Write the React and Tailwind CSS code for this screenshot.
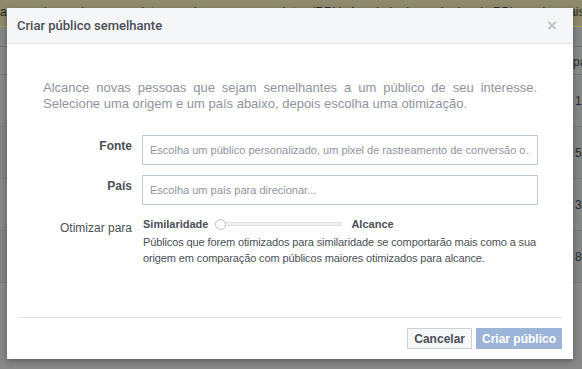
import React, { useState } from "react";

const font = "font-['Liberation_Sans',Arial,sans-serif]";

const TableRow = ({ label, tone }) => (
  <div className={`h-[52px] flex items-center border-b border-[#7a7a7a] ${tone}`}>
    <span className="text-[12px] text-[#2a2a2a] pl-[575px] whitespace-nowrap">{label}</span>
  </div>
);

const Field = ({ label, placeholder }) => (
  <div className="flex items-start">
    <label className="w-[125px] pt-[2px] text-right text-[12px] font-bold text-[#4b4f56]">{label}</label>
    <input
      className="ml-[10px] w-[396px] h-[30px] border border-[#bdc7d8] px-[7px] text-[11px] text-[#1d2129] placeholder:text-[#90949c] outline-none"
      placeholder={placeholder}
    />
  </div>
);

const App = () => {
  const [value, setValue] = useState(0);

  return (
    <div className={`relative w-[582px] h-[369px] overflow-hidden bg-[#888888] ${font}`}>
      {/* dimmed page behind the dialog */}
      <div className="h-[27px] bg-[#8e8a6e] border-b border-[#a39a5c] pt-[3px] text-[12px] text-[#2b2a22] whitespace-nowrap">
        ara receber mais pessoas interessadas em seus produtos (RPL). A maioria dos anúncios de RPL recebe mais c
      </div>
      <div className="h-[20px] bg-[#858686] border-b border-[#6f7070]" />
      <div className="h-[28px] bg-[#878888] border-b border-[#777]">
        <span className="block pt-[6px] pl-[573px] text-[12px] text-[#2a2a2a]">pa</span>
      </div>
      <TableRow label="10" tone="bg-[#858686]" />
      <TableRow label="50" tone="bg-[#838484]" />
      <TableRow label="30" tone="bg-[#858686]" />
      <TableRow label="80" tone="bg-[#838484]" />
      <div className="h-[60px] bg-[#888888]" />

      {/* dialog */}
      <div className="absolute left-[7px] top-[8px] w-[566px] h-[351px] bg-white flex flex-col shadow-[0_2px_6px_rgba(0,0,0,0.35)]">
        <div className="h-[36px] shrink-0 bg-[#f5f6f7] border-b border-[#e5e5e5] flex items-center justify-between pl-[10px] pr-[16px]">
          <span className="font-['Roboto',Arial,sans-serif] text-[13px] font-medium text-[#4b4f56]">
            Criar público semelhante
          </span>
          <span className="text-[17px] leading-none font-bold text-[#bec2c9]">×</span>
        </div>

        <div className="flex-1 px-[36px] pt-[36px]">
          <p className="text-[13px] leading-[16px] text-[#90949c] text-justify [text-align-last:justify]">
            Alcance novas pessoas que sejam semelhantes a um público de seu interesse.
          </p>
          <p className="text-[13px] leading-[16px] text-[#90949c]">
            Selecione uma origem e um país abaixo, depois escolha uma otimização.
          </p>
        </div>

        <div className="absolute left-0 top-[127px] flex flex-col gap-[10px]">
          <Field
            label="Fonte"
            placeholder="Escolha um público personalizado, um pixel de rastreamento de conversão o..."
          />
          <Field label="País" placeholder="Escolha um país para direcionar..." />
        </div>

        <div className="absolute left-0 top-[209px] flex items-start">
          <span className="w-[125px] pt-[2px] text-right text-[12px] text-[#4b4f56]">Otimizar para</span>
          <div className="ml-[11px]">
            <div className="flex items-center h-[14px]">
              <span className="text-[11px] font-bold text-[#4b4f56]">Similaridade</span>
              <div className="relative ml-[7px] w-[127px] h-[11px] flex items-center">
                <div className="w-full h-[4px] rounded-full bg-[#f1f2f4] border border-[#dddfe2]" />
                <div
                  className="absolute top-0 w-[11px] h-[11px] rounded-full bg-white border border-[#bec2c9]"
                  style={{ left: `${value}%` }}
                  onClick={() => setValue(value)}
                />
              </div>
              <span className="ml-[9px] text-[11px] font-bold text-[#4b4f56]">Alcance</span>
            </div>
            <p className="mt-[3px] text-[11px] leading-[16px] tracking-[-0.12px] text-[#4b4f56]">
              Públicos que forem otimizados para similaridade se comportarão mais como a sua
              <br />
              origem em comparação com públicos maiores otimizados para alcance.
            </p>
          </div>
        </div>

        <div className="mx-[11px] border-t border-[#e5e5e5] h-[42px] flex items-center justify-end gap-[4px] shrink-0">
          <button className="h-[21px] px-[6px] border border-[#ced0d4] bg-[#f6f7f9] text-[12px] font-bold text-[#4b4f56]">
            Cancelar
          </button>
          <button className="h-[21px] px-[5px] bg-[#9cb4d8] border border-[#9cb4d8] text-[12px] font-bold text-white">
            Criar público
          </button>
        </div>
      </div>
    </div>
  );
};

export default App;
